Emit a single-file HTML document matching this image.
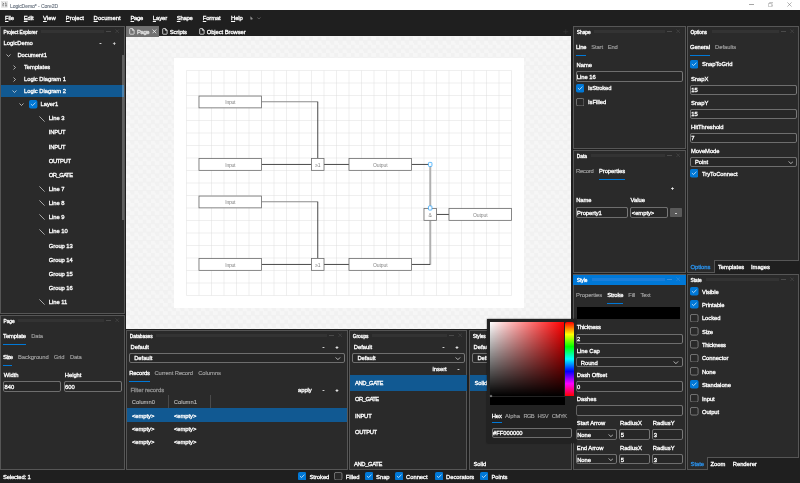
<!DOCTYPE html>
<html><head><meta charset="utf-8"><title>LogicDemo* - Core2D</title>
<style>
html,body{margin:0;padding:0;background:#1f1f1f;}
body{width:800px;height:483px;position:relative;overflow:hidden;font-family:"Liberation Sans",sans-serif;}
div,.a,.t{position:absolute;}
.t{white-space:nowrap;display:block;}
u{text-decoration-thickness:0.4px;text-underline-offset:0.9px;}
#r{left:0;top:0;width:800px;height:483px;will-change:transform;}
</style></head><body><div id="r">
<div style="left:0px;top:0px;width:800px;height:9.6px;background:#ffffff;"></div>
<svg class="a" style="left:0.9px;top:1.1px" width="7" height="6.6" viewBox="0 0 14 13.2"><rect x="0.4" y="0.4" width="13.2" height="12.4" fill="#f0f0f0" stroke="#d4d4d4" stroke-width="0.8"/><path d="M2.6 3.6 L6.2 5.6 L2.6 7.6 M2.6 9.6 H6.2" stroke="#3a3a3a" stroke-width="1.1" fill="none"/><path d="M8.4 4.4 L10 3.4 V10 M8.4 10 H11.6" stroke="#3a3a3a" stroke-width="1.2" fill="none"/></svg>
<span class="t" style="top:2px;font-size:5.1px;line-height:8px;color:#6a7480;letter-spacing:-0.089px;-webkit-text-stroke:0.12px #6a7480;left:9.9px;">LogicDemo* - Core2D</span>
<div style="left:749.4px;top:4.15px;width:4.4px;height:0.5px;background:#a6a6a6;"></div>
<svg class="a" style="left:767.6px;top:1.8px" width="5.6" height="5.2" viewBox="0 0 11 10"><rect x="0.7" y="2.7" width="6.8" height="6.6" rx="1" fill="#fff" stroke="#8a8a8a" stroke-width="1.0"/><path d="M3 2.5 V1.6 Q3 0.7 4 0.7 H9.3 Q10.3 0.7 10.3 1.7 V6.5 Q10.3 7.4 9.4 7.4 H7.6" fill="none" stroke="#8a8a8a" stroke-width="1.0"/></svg>
<svg class="a" style="left:787px;top:1.9px" width="5" height="5" viewBox="0 0 10 10"><path d="M0.8 0.8 L9.2 9.2 M9.2 0.8 L0.8 9.2" stroke="#707070" stroke-width="1.0" fill="none"/></svg>
<div style="left:0px;top:9.6px;width:800px;height:473.4px;background:#1f1f1f;"></div>
<span class="t" style="top:14px;font-size:5.9px;line-height:8px;color:#fff;letter-spacing:-0.177px;-webkit-text-stroke:0.3px #fff;left:5px;"><u>F</u>ile</span>
<span class="t" style="top:14px;font-size:5.9px;line-height:8px;color:#fff;letter-spacing:-0.117px;-webkit-text-stroke:0.3px #fff;left:23.8px;"><u>E</u>dit</span>
<span class="t" style="top:14px;font-size:5.9px;line-height:8px;color:#fff;letter-spacing:0.030px;-webkit-text-stroke:0.3px #fff;left:43px;"><u>V</u>iew</span>
<span class="t" style="top:14px;font-size:5.9px;line-height:8px;color:#fff;letter-spacing:-0.023px;-webkit-text-stroke:0.3px #fff;left:65.8px;"><u>P</u>roject</span>
<span class="t" style="top:14px;font-size:5.9px;line-height:8px;color:#fff;letter-spacing:0.039px;-webkit-text-stroke:0.3px #fff;left:93.6px;"><u>D</u>ocument</span>
<span class="t" style="top:14px;font-size:5.9px;line-height:8px;color:#fff;letter-spacing:-0.320px;-webkit-text-stroke:0.3px #fff;left:130.5px;"><u>P</u>age</span>
<span class="t" style="top:14px;font-size:5.9px;line-height:8px;color:#fff;letter-spacing:-0.112px;-webkit-text-stroke:0.3px #fff;left:152.8px;"><u>L</u>ayer</span>
<span class="t" style="top:14px;font-size:5.9px;line-height:8px;color:#fff;letter-spacing:-0.272px;-webkit-text-stroke:0.3px #fff;left:176.8px;"><u>S</u>hape</span>
<span class="t" style="top:14px;font-size:5.9px;line-height:8px;color:#fff;letter-spacing:-0.164px;-webkit-text-stroke:0.3px #fff;left:202.8px;"><u>F</u>ormat</span>
<span class="t" style="top:14px;font-size:5.9px;line-height:8px;color:#fff;letter-spacing:-0.084px;-webkit-text-stroke:0.3px #fff;left:231px;"><u>H</u>elp</span>
<svg class="a" style="left:250.2px;top:15.6px" width="3.3" height="4.8" viewBox="0 0 6.6 9.6"><path d="M0.8 0.3 L0.8 7.6 L2.5 6.2 L3.8 9.2 L5.2 8.6 L3.9 5.8 L6.2 5.6 Z" fill="#8f8f8f"/></svg>
<svg class="a" style="left:257.1px;top:16.95px" width="3.8" height="2.5" viewBox="0 0 10 6"><path d="M0.8 0.8 L5 5 L9.2 0.8" fill="none" stroke="#808080" stroke-width="1.58"/></svg>
<div style="left:0.1px;top:26.3px;width:124.7px;height:287.8px;background:#2a2a2a;box-shadow:inset 0 0 0 1px #565656;"></div>
<span class="t" style="top:29px;font-size:4.85px;line-height:8px;color:#fff;letter-spacing:-0.04px;-webkit-text-stroke:0.3px #fff;left:3.5px;">Project Explorer</span>
<div style="left:40.5px;top:29.9px;width:63.7px;height:3px;background:#333333;"></div>
<div style="left:106.3px;top:31.1px;width:4.9px;height:0.7px;background:#4a4a4a;"></div>
<svg class="a" style="left:115.2px;top:29.3px" width="4.4" height="4.4" viewBox="0 0 10 10"><path d="M1 1 L9 9 M9 1 L1 9" stroke="#4a4a4a" stroke-width="1.5" fill="none"/></svg>
<span class="t" style="top:39px;font-size:5.83px;line-height:8px;color:#fff;letter-spacing:-0.04px;-webkit-text-stroke:0.3px #fff;left:3.6px;">LogicDemo</span>
<span class="t" style="top:39px;font-size:5.83px;line-height:8px;color:#fff;letter-spacing:-0.04px;-webkit-text-stroke:0.3px #fff;left:99.5px;">-</span>
<span class="t" style="top:39px;font-size:5px;line-height:8px;color:#fff;letter-spacing:-0.04px;-webkit-text-stroke:0.15px #fff;left:112.8px;">+</span>
<svg class="a" style="left:5.7px;top:53.5px" width="5" height="3" viewBox="0 0 10 6"><path d="M1 1 L5 5 L9 1" fill="none" stroke="#dcdcdc" stroke-width="1.5"/></svg>
<span class="t" style="top:51px;font-size:5.83px;line-height:8px;color:#fff;letter-spacing:-0.04px;-webkit-text-stroke:0.3px #fff;left:17.4px;">Document1</span>
<svg class="a" style="left:13.1px;top:64.5px" width="3" height="5" viewBox="0 0 6 10"><path d="M1 1 L5 5 L1 9" fill="none" stroke="#dcdcdc" stroke-width="1.5"/></svg>
<span class="t" style="top:63px;font-size:5.83px;line-height:8px;color:#fff;letter-spacing:-0.04px;-webkit-text-stroke:0.3px #fff;left:24px;">Templates</span>
<svg class="a" style="left:13.1px;top:76.5px" width="3" height="5" viewBox="0 0 6 10"><path d="M1 1 L5 5 L1 9" fill="none" stroke="#dcdcdc" stroke-width="1.5"/></svg>
<span class="t" style="top:75px;font-size:5.83px;line-height:8px;color:#fff;letter-spacing:-0.04px;-webkit-text-stroke:0.3px #fff;left:24px;">Logic Diagram 1</span>
<div style="left:1.1px;top:85.2px;width:122.7px;height:11.9px;background:#115992;"></div>
<svg class="a" style="left:12.3px;top:89.7px" width="5" height="3" viewBox="0 0 10 6"><path d="M1 1 L5 5 L9 1" fill="none" stroke="#dcdcdc" stroke-width="1.5"/></svg>
<span class="t" style="top:87px;font-size:5.83px;line-height:8px;color:#fff;letter-spacing:-0.04px;-webkit-text-stroke:0.3px #fff;left:24px;">Logic Diagram 2</span>
<svg class="a" style="left:18.9px;top:102.9px" width="5" height="3" viewBox="0 0 10 6"><path d="M1 1 L5 5 L9 1" fill="none" stroke="#dcdcdc" stroke-width="1.5"/></svg>
<svg class="a" style="left:29.3px;top:100.2px" width="8.4" height="8.4" viewBox="0 0 20 20"><rect x="0" y="0" width="20" height="20" rx="4.2" fill="#0078d7"/><path d="M5.2 10.3 L8.3 13.2 L14.8 7.1" fill="none" stroke="#fff" stroke-width="1.6" stroke-linecap="round" stroke-linejoin="round"/></svg>
<span class="t" style="top:100px;font-size:5.83px;line-height:8px;color:#fff;letter-spacing:-0.04px;-webkit-text-stroke:0.3px #fff;left:40.6px;">Layer1</span>
<svg class="a" style="left:39px;top:115.5px" width="6" height="6" viewBox="0 0 6 6"><path d="M0.4 0.4 L5.6 5.6" stroke="#d2d2d2" stroke-width="0.75" fill="none"/></svg>
<span class="t" style="top:114px;font-size:5.83px;line-height:8px;color:#fff;letter-spacing:-0.04px;-webkit-text-stroke:0.3px #fff;left:48.8px;">Line 3</span>
<span class="t" style="top:128px;font-size:5.83px;line-height:8px;color:#fff;letter-spacing:-0.198px;-webkit-text-stroke:0.3px #fff;left:48.8px;">INPUT</span>
<span class="t" style="top:143px;font-size:5.83px;line-height:8px;color:#fff;letter-spacing:-0.198px;-webkit-text-stroke:0.3px #fff;left:48.8px;">INPUT</span>
<span class="t" style="top:157px;font-size:5.83px;line-height:8px;color:#fff;letter-spacing:-0.361px;-webkit-text-stroke:0.3px #fff;left:48.8px;">OUTPUT</span>
<span class="t" style="top:171px;font-size:5.83px;line-height:8px;color:#fff;letter-spacing:-0.533px;-webkit-text-stroke:0.3px #fff;left:48.8px;">OR_GATE</span>
<svg class="a" style="left:39px;top:186.2px" width="6" height="6" viewBox="0 0 6 6"><path d="M0.4 0.4 L5.6 5.6" stroke="#d2d2d2" stroke-width="0.75" fill="none"/></svg>
<span class="t" style="top:185px;font-size:5.83px;line-height:8px;color:#fff;letter-spacing:-0.04px;-webkit-text-stroke:0.3px #fff;left:48.8px;">Line 7</span>
<svg class="a" style="left:39px;top:200.3px" width="6" height="6" viewBox="0 0 6 6"><path d="M0.4 0.4 L5.6 5.6" stroke="#d2d2d2" stroke-width="0.75" fill="none"/></svg>
<span class="t" style="top:199px;font-size:5.83px;line-height:8px;color:#fff;letter-spacing:-0.04px;-webkit-text-stroke:0.3px #fff;left:48.8px;">Line 8</span>
<svg class="a" style="left:39px;top:214.4px" width="6" height="6" viewBox="0 0 6 6"><path d="M0.4 0.4 L5.6 5.6" stroke="#d2d2d2" stroke-width="0.75" fill="none"/></svg>
<span class="t" style="top:213px;font-size:5.83px;line-height:8px;color:#fff;letter-spacing:-0.04px;-webkit-text-stroke:0.3px #fff;left:48.8px;">Line 9</span>
<svg class="a" style="left:39px;top:228.5px" width="6" height="6" viewBox="0 0 6 6"><path d="M0.4 0.4 L5.6 5.6" stroke="#d2d2d2" stroke-width="0.75" fill="none"/></svg>
<span class="t" style="top:227px;font-size:5.83px;line-height:8px;color:#fff;letter-spacing:-0.04px;-webkit-text-stroke:0.3px #fff;left:48.8px;">Line 10</span>
<span class="t" style="top:242px;font-size:5.83px;line-height:8px;color:#fff;letter-spacing:-0.04px;-webkit-text-stroke:0.3px #fff;left:48.8px;">Group 13</span>
<span class="t" style="top:256px;font-size:5.83px;line-height:8px;color:#fff;letter-spacing:-0.04px;-webkit-text-stroke:0.3px #fff;left:48.8px;">Group 14</span>
<span class="t" style="top:270px;font-size:5.83px;line-height:8px;color:#fff;letter-spacing:-0.04px;-webkit-text-stroke:0.3px #fff;left:48.8px;">Group 15</span>
<span class="t" style="top:284px;font-size:5.83px;line-height:8px;color:#fff;letter-spacing:-0.04px;-webkit-text-stroke:0.3px #fff;left:48.8px;">Group 16</span>
<svg class="a" style="left:39px;top:299.3px" width="6" height="6" viewBox="0 0 6 6"><path d="M0.4 0.4 L5.6 5.6" stroke="#d2d2d2" stroke-width="0.75" fill="none"/></svg>
<span class="t" style="top:298px;font-size:5.83px;line-height:8px;color:#fff;letter-spacing:-0.04px;-webkit-text-stroke:0.3px #fff;left:48.8px;">Line 11</span>
<div style="left:121.9px;top:54.8px;width:2.1px;height:165.5px;background:rgba(255,255,255,0.25);"></div>
<div style="left:0.1px;top:315.1px;width:124.7px;height:155.1px;background:#2a2a2a;box-shadow:inset 0 0 0 1px #565656;"></div>
<span class="t" style="top:318px;font-size:4.85px;line-height:8px;color:#fff;letter-spacing:-0.04px;-webkit-text-stroke:0.3px #fff;left:3.5px;">Page</span>
<div style="left:17.5px;top:318.7px;width:86.7px;height:3px;background:#333333;"></div>
<div style="left:106.3px;top:319.9px;width:4.9px;height:0.7px;background:#4a4a4a;"></div>
<svg class="a" style="left:115.2px;top:318.1px" width="4.4" height="4.4" viewBox="0 0 10 10"><path d="M1 1 L9 9 M9 1 L1 9" stroke="#4a4a4a" stroke-width="1.5" fill="none"/></svg>
<span class="t" style="top:332px;font-size:5.83px;line-height:8px;color:#fff;letter-spacing:-0.095px;-webkit-text-stroke:0.3px #fff;left:3.1px;">Template</span>
<div style="left:3.1px;top:343.75px;width:22.9px;height:0.9px;background:#0078d7;"></div>
<span class="t" style="top:332px;font-size:5.83px;line-height:8px;color:#a2a2a2;letter-spacing:-0.129px;-webkit-text-stroke:0.15px #a2a2a2;left:31.2px;">Data</span>
<span class="t" style="top:353px;font-size:5.83px;line-height:8px;color:#fff;letter-spacing:-0.485px;-webkit-text-stroke:0.3px #fff;left:3.1px;">Size</span>
<div style="left:3.1px;top:364.75px;width:9.4px;height:0.9px;background:#0078d7;"></div>
<span class="t" style="top:353px;font-size:5.83px;line-height:8px;color:#a2a2a2;letter-spacing:-0.041px;-webkit-text-stroke:0.15px #a2a2a2;left:18px;">Background</span>
<span class="t" style="top:353px;font-size:5.83px;line-height:8px;color:#a2a2a2;letter-spacing:-0.078px;-webkit-text-stroke:0.15px #a2a2a2;left:53.8px;">Grid</span>
<span class="t" style="top:353px;font-size:5.83px;line-height:8px;color:#a2a2a2;letter-spacing:-0.204px;-webkit-text-stroke:0.15px #a2a2a2;left:70px;">Data</span>
<span class="t" style="top:371px;font-size:5.83px;line-height:8px;color:#fff;letter-spacing:-0.04px;-webkit-text-stroke:0.3px #fff;left:3.8px;">Width</span>
<span class="t" style="top:371px;font-size:5.83px;line-height:8px;color:#fff;letter-spacing:-0.04px;-webkit-text-stroke:0.3px #fff;left:64.8px;">Height</span>
<div style="left:3.1px;top:381px;width:58.1px;height:11px;background:#272727;box-shadow:inset 0 0 0 0.85px #868686;border-radius:2.4px;"></div>
<span class="t" style="top:383px;font-size:5.83px;line-height:8px;color:#fff;letter-spacing:-0.04px;-webkit-text-stroke:0.3px #fff;left:4.6px;">840</span>
<div style="left:63.6px;top:381px;width:58.2px;height:11px;background:#272727;box-shadow:inset 0 0 0 0.85px #868686;border-radius:2.4px;"></div>
<span class="t" style="top:383px;font-size:5.83px;line-height:8px;color:#fff;letter-spacing:-0.04px;-webkit-text-stroke:0.3px #fff;left:65.1px;">600</span>
<div style="left:126.3px;top:36.3px;width:444.9px;height:292.8px;background:#f4f4f4;background-image:conic-gradient(#f6f6f6 25%,#f1f1f1 0 50%,#f6f6f6 0 75%,#f1f1f1 0);background-size:8.333px 8.333px;background-position:0.1px 0.4px;"></div>
<div style="left:126.2px;top:26.2px;width:32.8px;height:10.7px;background:#727272;"></div>
<svg class="a" style="left:129.1px;top:27.9px" width="5.8" height="6.8" viewBox="0 0 11.6 13.6"><path d="M1.4 2.4 Q1.4 1.2 2.6 1.2 H6.8 L10.2 4.6 V11.2 Q10.2 12.4 9 12.4 H2.6 Q1.4 12.4 1.4 11.2 Z M6.8 1.2 V4.6 H10.2" fill="none" stroke="#f0f0f0" stroke-width="1.5" stroke-linejoin="round"/></svg>
<span class="t" style="top:28px;font-size:5.9px;line-height:8px;color:#e4e4e4;letter-spacing:-0.445px;-webkit-text-stroke:0.3px #e4e4e4;left:137.1px;">Page</span>
<svg class="a" style="left:151.8px;top:28.9px" width="4.8" height="4.8" viewBox="0 0 10 10"><path d="M1.2 1.2 L8.8 8.8 M8.8 1.2 L1.2 8.8" stroke="#f4f4f4" stroke-width="1.7" fill="none"/></svg>
<svg class="a" style="left:161.9px;top:27.9px" width="5.8" height="6.8" viewBox="0 0 11.6 13.6"><path d="M1.4 2.4 Q1.4 1.2 2.6 1.2 H6.8 L10.2 4.6 V11.2 Q10.2 12.4 9 12.4 H2.6 Q1.4 12.4 1.4 11.2 Z M6.8 1.2 V4.6 H10.2" fill="none" stroke="#fff" stroke-width="1.5" stroke-linejoin="round"/></svg>
<span class="t" style="top:28px;font-size:5.9px;line-height:8px;color:#fff;letter-spacing:-0.104px;-webkit-text-stroke:0.3px #fff;left:169.7px;">Scripts</span>
<svg class="a" style="left:198.8px;top:27.9px" width="5.8" height="6.8" viewBox="0 0 11.6 13.6"><path d="M1.4 2.4 Q1.4 1.2 2.6 1.2 H6.8 L10.2 4.6 V11.2 Q10.2 12.4 9 12.4 H2.6 Q1.4 12.4 1.4 11.2 Z M6.8 1.2 V4.6 H10.2" fill="none" stroke="#fff" stroke-width="1.5" stroke-linejoin="round"/></svg>
<span class="t" style="top:28px;font-size:5.9px;line-height:8px;color:#fff;letter-spacing:-0.095px;-webkit-text-stroke:0.3px #fff;left:206.7px;">Object Browser</span>
<svg class="a" style="left:563px;top:28.6px" width="5.6" height="5.6" viewBox="0 0 10 10"><path d="M5 0.5 V9.5 M0.5 5 H9.5" stroke="#3c3c3c" stroke-width="1" fill="none"/></svg>
<div style="left:174px;top:58px;width:350px;height:250px;background:#fff;"></div>
<svg class="a" style="left:174px;top:58px" width="350" height="250" viewBox="174 58 350 250"><path d="M186.5 70.5 V295.5 M199 70.5 V295.5 M211.5 70.5 V295.5 M224 70.5 V295.5 M236.5 70.5 V295.5 M249 70.5 V295.5 M261.5 70.5 V295.5 M274 70.5 V295.5 M286.5 70.5 V295.5 M299 70.5 V295.5 M311.5 70.5 V295.5 M324 70.5 V295.5 M336.5 70.5 V295.5 M349 70.5 V295.5 M361.5 70.5 V295.5 M374 70.5 V295.5 M386.5 70.5 V295.5 M399 70.5 V295.5 M411.5 70.5 V295.5 M424 70.5 V295.5 M436.5 70.5 V295.5 M449 70.5 V295.5 M461.5 70.5 V295.5 M474 70.5 V295.5 M486.5 70.5 V295.5 M499 70.5 V295.5 M511.5 70.5 V295.5 M186.5 70.5 H511.5 M186.5 83 H511.5 M186.5 95.5 H511.5 M186.5 108 H511.5 M186.5 120.5 H511.5 M186.5 133 H511.5 M186.5 145.5 H511.5 M186.5 158 H511.5 M186.5 170.5 H511.5 M186.5 183 H511.5 M186.5 195.5 H511.5 M186.5 208 H511.5 M186.5 220.5 H511.5 M186.5 233 H511.5 M186.5 245.5 H511.5 M186.5 258 H511.5 M186.5 270.5 H511.5 M186.5 283 H511.5 M186.5 295.5 H511.5 " stroke="#dcdcdc" stroke-width="0.45" fill="none"/><path d="M430.25 264.65 V220.5" stroke="#b0b0b0" stroke-width="2.0" fill="none"/><path d="M261.5 101.75 H318.15 M261.5 201.75 H318.15" stroke="#8c8c8c" stroke-width="1.1" fill="none"/><path d="M317.75 101.75 V158 M261.5 164.25 H311.5 M324 164.25 H349 M317.75 201.75 V258 M261.5 264.25 H311.5 M324 264.25 H349 M411.5 164.25 H430.25 M411.5 264.25 H430.25 M436.5 214.25 H449" stroke="#333" stroke-width="0.9" fill="none" transform="translate(0,0.2)"/><path d="M430.25 164.25 V208.5" stroke="#b0b0b0" stroke-width="2.0" fill="none"/><rect x="199" y="96.05" width="62.5" height="11.8" fill="#fff" stroke="#6c6c6c" stroke-width="0.8"/><rect x="199" y="158.55" width="62.5" height="11.8" fill="#fff" stroke="#6c6c6c" stroke-width="0.8"/><rect x="199" y="196.05" width="62.5" height="11.8" fill="#fff" stroke="#6c6c6c" stroke-width="0.8"/><rect x="199" y="258.55" width="62.5" height="11.8" fill="#fff" stroke="#6c6c6c" stroke-width="0.8"/><rect x="311.5" y="158.55" width="12.5" height="11.8" fill="#fff" stroke="#6c6c6c" stroke-width="0.8"/><rect x="311.5" y="258.55" width="12.5" height="11.8" fill="#fff" stroke="#6c6c6c" stroke-width="0.8"/><rect x="424" y="208.55" width="12.5" height="11.8" fill="#fff" stroke="#6c6c6c" stroke-width="0.8"/><rect x="349" y="158.55" width="62.5" height="11.8" fill="#fff" stroke="#6c6c6c" stroke-width="0.8"/><rect x="349" y="258.55" width="62.5" height="11.8" fill="#fff" stroke="#6c6c6c" stroke-width="0.8"/><rect x="449" y="208.55" width="62.5" height="11.8" fill="#fff" stroke="#6c6c6c" stroke-width="0.8"/><rect x="428.45" y="162.4" width="3.5" height="4.1" rx="0.8" fill="#f8fcff" stroke="#3aa9fb" stroke-width="0.8"/><rect x="428.45" y="205.95" width="3.5" height="4.1" rx="0.8" fill="#f8fcff" stroke="#3aa9fb" stroke-width="0.8"/></svg>
<span class="t" style="top:98px;font-size:5px;line-height:8px;color:#868686;letter-spacing:-0.224px;left:230.25px;transform:translateX(-50%);">Input</span>
<span class="t" style="top:161px;font-size:5px;line-height:8px;color:#868686;letter-spacing:-0.224px;left:230.25px;transform:translateX(-50%);">Input</span>
<span class="t" style="top:198px;font-size:5px;line-height:8px;color:#868686;letter-spacing:-0.224px;left:230.25px;transform:translateX(-50%);">Input</span>
<span class="t" style="top:261px;font-size:5px;line-height:8px;color:#868686;letter-spacing:-0.224px;left:230.25px;transform:translateX(-50%);">Input</span>
<span class="t" style="top:161px;font-size:5px;line-height:8px;color:#868686;letter-spacing:-0.362px;left:317.75px;transform:translateX(-50%);">≥1</span>
<span class="t" style="top:261px;font-size:5px;line-height:8px;color:#868686;letter-spacing:-0.362px;left:317.75px;transform:translateX(-50%);">≥1</span>
<span class="t" style="top:211px;font-size:5px;line-height:8px;color:#868686;letter-spacing:-0.04px;left:430.25px;transform:translateX(-50%);">&amp;</span>
<span class="t" style="top:161px;font-size:5px;line-height:8px;color:#868686;letter-spacing:-0.102px;left:380.25px;transform:translateX(-50%);">Output</span>
<span class="t" style="top:261px;font-size:5px;line-height:8px;color:#868686;letter-spacing:-0.102px;left:380.25px;transform:translateX(-50%);">Output</span>
<span class="t" style="top:211px;font-size:5px;line-height:8px;color:#868686;letter-spacing:-0.102px;left:480.25px;transform:translateX(-50%);">Output</span>
<div style="left:126.4px;top:330.2px;width:221.3px;height:140px;background:#2a2a2a;box-shadow:inset 0 0 0 1px #565656;"></div>
<span class="t" style="top:333px;font-size:4.85px;line-height:8px;color:#fff;letter-spacing:-0.04px;-webkit-text-stroke:0.3px #fff;left:129.8px;">Databases</span>
<div style="left:155.8px;top:333.8px;width:171.3px;height:3px;background:#333333;"></div>
<div style="left:329.2px;top:335px;width:4.9px;height:0.7px;background:#4a4a4a;"></div>
<svg class="a" style="left:338.1px;top:333.2px" width="4.4" height="4.4" viewBox="0 0 10 10"><path d="M1 1 L9 9 M9 1 L1 9" stroke="#4a4a4a" stroke-width="1.5" fill="none"/></svg>
<span class="t" style="top:343px;font-size:5.83px;line-height:8px;color:#fff;letter-spacing:-0.04px;-webkit-text-stroke:0.3px #fff;left:130.6px;">Default</span>
<span class="t" style="top:343px;font-size:5.83px;line-height:8px;color:#fff;letter-spacing:-0.04px;-webkit-text-stroke:0.3px #fff;left:322.6px;">-</span>
<span class="t" style="top:343px;font-size:5px;line-height:8px;color:#fff;letter-spacing:-0.04px;-webkit-text-stroke:0.2px #fff;left:335.5px;">+</span>
<div style="left:129.2px;top:352.9px;width:215.6px;height:9.8px;background:#272727;box-shadow:inset 0 0 0 0.85px #868686;border-radius:2.4px;"></div>
<span class="t" style="top:354px;font-size:5.83px;line-height:8px;color:#fff;letter-spacing:-0.04px;-webkit-text-stroke:0.3px #fff;left:134.2px;">Default</span>
<svg class="a" style="left:335.4px;top:356.7px" width="5.8" height="3.2" viewBox="0 0 10 6"><path d="M0.8 0.8 L5 5 L9.2 0.8" fill="none" stroke="#d8d8d8" stroke-width="1.55"/></svg>
<span class="t" style="top:369px;font-size:5.83px;line-height:8px;color:#fff;letter-spacing:-0.158px;-webkit-text-stroke:0.3px #fff;left:129.2px;">Records</span>
<div style="left:129.2px;top:380.85px;width:20.6px;height:0.9px;background:#0078d7;"></div>
<span class="t" style="top:369px;font-size:5.83px;line-height:8px;color:#a2a2a2;letter-spacing:-0.097px;-webkit-text-stroke:0.15px #a2a2a2;left:154.5px;">Current Record</span>
<span class="t" style="top:369px;font-size:5.83px;line-height:8px;color:#a2a2a2;letter-spacing:-0.029px;-webkit-text-stroke:0.15px #a2a2a2;left:198.2px;">Columns</span>
<span class="t" style="top:386px;font-size:5.83px;line-height:8px;color:#8e8e8e;letter-spacing:-0.04px;-webkit-text-stroke:0.3px #8e8e8e;left:130.6px;">Filter records</span>
<span class="t" style="top:386px;font-size:5.83px;line-height:8px;color:#fff;letter-spacing:-0.04px;-webkit-text-stroke:0.3px #fff;left:298px;">apply</span>
<span class="t" style="top:386px;font-size:5.83px;line-height:8px;color:#fff;letter-spacing:-0.04px;-webkit-text-stroke:0.3px #fff;left:322.6px;">-</span>
<span class="t" style="top:386px;font-size:5px;line-height:8px;color:#fff;letter-spacing:-0.04px;-webkit-text-stroke:0.2px #fff;left:335.5px;">+</span>
<div style="left:168.4px;top:395px;width:0.5px;height:13.6px;background:#4a4a4a;"></div>
<div style="left:210.4px;top:395px;width:0.5px;height:13.6px;background:#4a4a4a;"></div>
<span class="t" style="top:398px;font-size:5.83px;line-height:8px;color:#bdbdbd;letter-spacing:-0.04px;-webkit-text-stroke:0.1px #bdbdbd;left:131.8px;">Column0</span>
<span class="t" style="top:398px;font-size:5.83px;line-height:8px;color:#bdbdbd;letter-spacing:-0.04px;-webkit-text-stroke:0.1px #bdbdbd;left:173.8px;">Column1</span>
<div style="left:127.3px;top:408.4px;width:219.5px;height:13.7px;background:#115992;"></div>
<span class="t" style="top:412px;font-size:5.83px;line-height:8px;color:#fff;letter-spacing:-0.04px;-webkit-text-stroke:0.3px #fff;left:131.9px;">&lt;empty&gt;</span>
<span class="t" style="top:412px;font-size:5.83px;line-height:8px;color:#fff;letter-spacing:-0.04px;-webkit-text-stroke:0.3px #fff;left:173.9px;">&lt;empty&gt;</span>
<span class="t" style="top:425px;font-size:5.83px;line-height:8px;color:#fff;letter-spacing:-0.04px;-webkit-text-stroke:0.3px #fff;left:131.9px;">&lt;empty&gt;</span>
<span class="t" style="top:425px;font-size:5.83px;line-height:8px;color:#fff;letter-spacing:-0.04px;-webkit-text-stroke:0.3px #fff;left:173.9px;">&lt;empty&gt;</span>
<span class="t" style="top:438px;font-size:5.83px;line-height:8px;color:#fff;letter-spacing:-0.04px;-webkit-text-stroke:0.3px #fff;left:131.9px;">&lt;empty&gt;</span>
<span class="t" style="top:438px;font-size:5.83px;line-height:8px;color:#fff;letter-spacing:-0.04px;-webkit-text-stroke:0.3px #fff;left:173.9px;">&lt;empty&gt;</span>
<div style="left:349.4px;top:330.2px;width:118.1px;height:140px;background:#2a2a2a;box-shadow:inset 0 0 0 1px #565656;"></div>
<span class="t" style="top:333px;font-size:4.85px;line-height:8px;color:#fff;letter-spacing:-0.04px;-webkit-text-stroke:0.3px #fff;left:352.8px;">Groups</span>
<div style="left:371.8px;top:333.8px;width:75.1px;height:3px;background:#333333;"></div>
<div style="left:449px;top:335px;width:4.9px;height:0.7px;background:#4a4a4a;"></div>
<svg class="a" style="left:457.9px;top:333.2px" width="4.4" height="4.4" viewBox="0 0 10 10"><path d="M1 1 L9 9 M9 1 L1 9" stroke="#4a4a4a" stroke-width="1.5" fill="none"/></svg>
<span class="t" style="top:343px;font-size:5.83px;line-height:8px;color:#fff;letter-spacing:-0.04px;-webkit-text-stroke:0.3px #fff;left:353.8px;">Default</span>
<span class="t" style="top:343px;font-size:5.83px;line-height:8px;color:#fff;letter-spacing:-0.04px;-webkit-text-stroke:0.3px #fff;left:442.4px;">-</span>
<span class="t" style="top:343px;font-size:5px;line-height:8px;color:#fff;letter-spacing:-0.04px;-webkit-text-stroke:0.2px #fff;left:455.4px;">+</span>
<div style="left:352.4px;top:352.9px;width:112.2px;height:9.8px;background:#272727;box-shadow:inset 0 0 0 0.85px #868686;border-radius:2.4px;"></div>
<span class="t" style="top:354px;font-size:5.83px;line-height:8px;color:#fff;letter-spacing:-0.04px;-webkit-text-stroke:0.3px #fff;left:357.4px;">Default</span>
<svg class="a" style="left:455.2px;top:356.7px" width="5.8" height="3.2" viewBox="0 0 10 6"><path d="M0.8 0.8 L5 5 L9.2 0.8" fill="none" stroke="#d8d8d8" stroke-width="1.55"/></svg>
<span class="t" style="top:365px;font-size:5.83px;line-height:8px;color:#fff;letter-spacing:-0.04px;-webkit-text-stroke:0.3px #fff;left:432.6px;">insert</span>
<span class="t" style="top:365px;font-size:5.83px;line-height:8px;color:#fff;letter-spacing:-0.04px;-webkit-text-stroke:0.3px #fff;left:457.6px;">-</span>
<div style="left:350.3px;top:374.6px;width:116.3px;height:16.8px;background:#115992;"></div>
<span class="t" style="top:379px;font-size:5.83px;line-height:8px;color:#fff;letter-spacing:-0.374px;-webkit-text-stroke:0.3px #fff;left:355px;">AND_GATE</span>
<span class="t" style="top:395px;font-size:5.83px;line-height:8px;color:#fff;letter-spacing:-0.533px;-webkit-text-stroke:0.3px #fff;left:355px;">OR_GATE</span>
<span class="t" style="top:412px;font-size:5.83px;line-height:8px;color:#fff;letter-spacing:-0.198px;-webkit-text-stroke:0.3px #fff;left:355px;">INPUT</span>
<span class="t" style="top:428px;font-size:5.83px;line-height:8px;color:#fff;letter-spacing:-0.361px;-webkit-text-stroke:0.3px #fff;left:355px;">OUTPUT</span>
<span class="t" style="top:460px;font-size:5.83px;line-height:8px;color:#fff;letter-spacing:-0.374px;-webkit-text-stroke:0.3px #fff;left:354px;">AND_GATE</span>
<div style="left:469.4px;top:330.2px;width:102.4px;height:140px;background:#2a2a2a;box-shadow:inset 0 0 0 1px #565656;"></div>
<span class="t" style="top:333px;font-size:4.85px;line-height:8px;color:#fff;letter-spacing:-0.04px;-webkit-text-stroke:0.3px #fff;left:472.8px;">Styles</span>
<div style="left:489.8px;top:333.8px;width:61.4px;height:3px;background:#333333;"></div>
<div style="left:553.3px;top:335px;width:4.9px;height:0.7px;background:#4a4a4a;"></div>
<svg class="a" style="left:562.2px;top:333.2px" width="4.4" height="4.4" viewBox="0 0 10 10"><path d="M1 1 L9 9 M9 1 L1 9" stroke="#4a4a4a" stroke-width="1.5" fill="none"/></svg>
<span class="t" style="top:343px;font-size:5.83px;line-height:8px;color:#fff;letter-spacing:-0.04px;-webkit-text-stroke:0.3px #fff;left:473.6px;">Default</span>
<div style="left:472.4px;top:352.9px;width:96px;height:9.8px;background:#272727;box-shadow:inset 0 0 0 0.85px #868686;border-radius:2.4px;"></div>
<span class="t" style="top:354px;font-size:5.83px;line-height:8px;color:#fff;letter-spacing:-0.04px;-webkit-text-stroke:0.3px #fff;left:477.4px;">Default</span>
<svg class="a" style="left:559px;top:356.7px" width="5.8" height="3.2" viewBox="0 0 10 6"><path d="M0.8 0.8 L5 5 L9.2 0.8" fill="none" stroke="#d8d8d8" stroke-width="1.55"/></svg>
<div style="left:470.3px;top:374.6px;width:100.6px;height:16.8px;background:#115992;"></div>
<span class="t" style="top:379px;font-size:5.83px;line-height:8px;color:#fff;letter-spacing:-0.04px;-webkit-text-stroke:0.3px #fff;left:474.4px;">Solid</span>
<span class="t" style="top:460px;font-size:5.83px;line-height:8px;color:#fff;letter-spacing:-0.04px;-webkit-text-stroke:0.3px #fff;left:473.4px;">Solid</span>
<div style="left:573.4px;top:26.3px;width:112.2px;height:122.4px;background:#2a2a2a;box-shadow:inset 0 0 0 1px #565656;"></div>
<span class="t" style="top:29px;font-size:4.85px;line-height:8px;color:#fff;letter-spacing:-0.04px;-webkit-text-stroke:0.3px #fff;left:576.8px;">Shape</span>
<div style="left:593.8px;top:29.9px;width:71.2px;height:3px;background:#333333;"></div>
<div style="left:667.1px;top:31.1px;width:4.9px;height:0.7px;background:#4a4a4a;"></div>
<svg class="a" style="left:676px;top:29.3px" width="4.4" height="4.4" viewBox="0 0 10 10"><path d="M1 1 L9 9 M9 1 L1 9" stroke="#4a4a4a" stroke-width="1.5" fill="none"/></svg>
<span class="t" style="top:43px;font-size:5.83px;line-height:8px;color:#fff;letter-spacing:-0.231px;-webkit-text-stroke:0.3px #fff;left:576.1px;">Line</span>
<div style="left:576.1px;top:54.95px;width:10.1px;height:0.9px;background:#0078d7;"></div>
<span class="t" style="top:43px;font-size:5.83px;line-height:8px;color:#a2a2a2;letter-spacing:-0.122px;-webkit-text-stroke:0.15px #a2a2a2;left:591.2px;">Start</span>
<span class="t" style="top:43px;font-size:5.83px;line-height:8px;color:#a2a2a2;letter-spacing:-0.258px;-webkit-text-stroke:0.15px #a2a2a2;left:607.8px;">End</span>
<span class="t" style="top:61px;font-size:5.83px;line-height:8px;color:#fff;letter-spacing:-0.04px;-webkit-text-stroke:0.3px #fff;left:576.6px;">Name</span>
<div style="left:575.6px;top:71.2px;width:107px;height:10.7px;background:#272727;box-shadow:inset 0 0 0 0.85px #868686;border-radius:2.4px;"></div>
<span class="t" style="top:73px;font-size:5.83px;line-height:8px;color:#fff;letter-spacing:-0.04px;-webkit-text-stroke:0.3px #fff;left:576.8px;">Line 16</span>
<svg class="a" style="left:576px;top:84.2px" width="8.4" height="8.4" viewBox="0 0 20 20"><rect x="0" y="0" width="20" height="20" rx="4.2" fill="#0078d7"/><path d="M5.2 10.3 L8.3 13.2 L14.8 7.1" fill="none" stroke="#fff" stroke-width="1.6" stroke-linecap="round" stroke-linejoin="round"/></svg>
<span class="t" style="top:84px;font-size:5.83px;line-height:8px;color:#fff;letter-spacing:-0.147px;-webkit-text-stroke:0.3px #fff;left:588px;">IsStroked</span>
<svg class="a" style="left:576px;top:97.8px" width="8.4" height="8.4" viewBox="0 0 20 20"><rect x="1" y="1" width="18" height="18" rx="3.8" fill="#292929" stroke="#8c8c8c" stroke-width="1.9"/></svg>
<span class="t" style="top:98px;font-size:5.83px;line-height:8px;color:#fff;letter-spacing:-0.04px;-webkit-text-stroke:0.3px #fff;left:588px;">IsFilled</span>
<div style="left:573.4px;top:150.1px;width:112.2px;height:123px;background:#2a2a2a;box-shadow:inset 0 0 0 1px #565656;"></div>
<span class="t" style="top:153px;font-size:4.85px;line-height:8px;color:#fff;letter-spacing:-0.04px;-webkit-text-stroke:0.3px #fff;left:576.8px;">Data</span>
<div style="left:590.8px;top:153.7px;width:74.2px;height:3px;background:#333333;"></div>
<div style="left:667.1px;top:154.9px;width:4.9px;height:0.7px;background:#4a4a4a;"></div>
<svg class="a" style="left:676px;top:153.1px" width="4.4" height="4.4" viewBox="0 0 10 10"><path d="M1 1 L9 9 M9 1 L1 9" stroke="#4a4a4a" stroke-width="1.5" fill="none"/></svg>
<span class="t" style="top:167px;font-size:5.83px;line-height:8px;color:#a2a2a2;letter-spacing:-0.216px;-webkit-text-stroke:0.15px #a2a2a2;left:576.1px;">Record</span>
<span class="t" style="top:167px;font-size:5.83px;line-height:8px;color:#fff;letter-spacing:-0.037px;-webkit-text-stroke:0.3px #fff;left:598.9px;">Properties</span>
<div style="left:598.9px;top:179.05px;width:26.2px;height:0.9px;background:#0078d7;"></div>
<span class="t" style="top:184px;font-size:5px;line-height:8px;color:#fff;letter-spacing:-0.04px;-webkit-text-stroke:0.2px #fff;left:671px;">+</span>
<span class="t" style="top:196px;font-size:5.83px;line-height:8px;color:#fff;letter-spacing:-0.04px;-webkit-text-stroke:0.3px #fff;left:576.2px;">Name</span>
<span class="t" style="top:196px;font-size:5.83px;line-height:8px;color:#fff;letter-spacing:-0.04px;-webkit-text-stroke:0.3px #fff;left:630.6px;">Value</span>
<div style="left:575.7px;top:207px;width:52px;height:10.7px;background:#272727;box-shadow:inset 0 0 0 0.85px #868686;border-radius:2.4px;"></div>
<span class="t" style="top:209px;font-size:5.83px;line-height:8px;color:#fff;letter-spacing:-0.04px;-webkit-text-stroke:0.3px #fff;left:576.9px;">Property1</span>
<div style="left:630.2px;top:207px;width:37.4px;height:10.7px;background:#272727;box-shadow:inset 0 0 0 0.85px #868686;border-radius:2.4px;"></div>
<span class="t" style="top:209px;font-size:5.83px;line-height:8px;color:#fff;letter-spacing:-0.04px;-webkit-text-stroke:0.3px #fff;left:631.8px;">&lt;empty&gt;</span>
<div style="left:670.3px;top:207.9px;width:11.8px;height:8.9px;background:#5a5a5a;border-radius:0.8px;"></div>
<span class="t" style="top:209px;font-size:5.83px;line-height:8px;color:#fff;letter-spacing:-0.04px;-webkit-text-stroke:0.3px #fff;left:674.9px;">-</span>
<div style="left:573.4px;top:274.3px;width:112.2px;height:195.9px;background:#2a2a2a;box-shadow:inset 0 0 0 1px #565656;"></div>
<div style="left:573.4px;top:274.5px;width:112.2px;height:10.5px;background:#0078d7;"></div>
<span class="t" style="top:277px;font-size:4.85px;line-height:8px;color:#fff;letter-spacing:-0.04px;-webkit-text-stroke:0.3px #fff;left:576.8px;">Style</span>
<div style="left:591.8px;top:277.9px;width:73.2px;height:3px;background:#1a7fdb;"></div>
<div style="left:667.1px;top:279.1px;width:4.9px;height:0.7px;background:#3b8ddb;"></div>
<svg class="a" style="left:676px;top:277.3px" width="4.4" height="4.4" viewBox="0 0 10 10"><path d="M1 1 L9 9 M9 1 L1 9" stroke="#3b8ddb" stroke-width="1.5" fill="none"/></svg>
<span class="t" style="top:291px;font-size:5.83px;line-height:8px;color:#a2a2a2;letter-spacing:-0.067px;-webkit-text-stroke:0.15px #a2a2a2;left:576.1px;">Properties</span>
<span class="t" style="top:291px;font-size:5.83px;line-height:8px;color:#fff;letter-spacing:-0.142px;-webkit-text-stroke:0.3px #fff;left:607.3px;">Stroke</span>
<div style="left:607.3px;top:302.85px;width:16px;height:0.9px;background:#0078d7;"></div>
<span class="t" style="top:291px;font-size:5.83px;line-height:8px;color:#a2a2a2;letter-spacing:-0.137px;-webkit-text-stroke:0.15px #a2a2a2;left:628.3px;">Fill</span>
<span class="t" style="top:291px;font-size:5.83px;line-height:8px;color:#a2a2a2;letter-spacing:-0.173px;-webkit-text-stroke:0.15px #a2a2a2;left:640.5px;">Text</span>
<div style="left:577px;top:306.8px;width:103.2px;height:11.9px;background:#000;"></div>
<span class="t" style="top:323px;font-size:5.83px;line-height:8px;color:#fff;letter-spacing:-0.272px;-webkit-text-stroke:0.3px #fff;left:576.8px;">Thickness</span>
<div style="left:575.6px;top:333.5px;width:107px;height:10.3px;background:#272727;box-shadow:inset 0 0 0 0.85px #868686;border-radius:2.4px;"></div>
<span class="t" style="top:335px;font-size:5.83px;line-height:8px;color:#fff;letter-spacing:-0.04px;-webkit-text-stroke:0.3px #fff;left:577px;">2</span>
<span class="t" style="top:347px;font-size:5.83px;line-height:8px;color:#fff;letter-spacing:-0.04px;-webkit-text-stroke:0.3px #fff;left:576.8px;">Line Cap</span>
<div style="left:575.6px;top:357.2px;width:107px;height:10.3px;background:#272727;box-shadow:inset 0 0 0 0.85px #868686;border-radius:2.4px;"></div>
<span class="t" style="top:359px;font-size:5.83px;line-height:8px;color:#fff;letter-spacing:-0.04px;-webkit-text-stroke:0.3px #fff;left:580.8px;">Round</span>
<svg class="a" style="left:673.2px;top:361.25px" width="5.8" height="3.2" viewBox="0 0 10 6"><path d="M0.8 0.8 L5 5 L9.2 0.8" fill="none" stroke="#d8d8d8" stroke-width="1.55"/></svg>
<span class="t" style="top:371px;font-size:5.83px;line-height:8px;color:#fff;letter-spacing:-0.04px;-webkit-text-stroke:0.3px #fff;left:576.8px;">Dash Offset</span>
<div style="left:575.6px;top:381.1px;width:107px;height:10.6px;background:#272727;box-shadow:inset 0 0 0 0.85px #868686;border-radius:2.4px;"></div>
<span class="t" style="top:383px;font-size:5.83px;line-height:8px;color:#fff;letter-spacing:-0.04px;-webkit-text-stroke:0.3px #fff;left:577px;">0</span>
<span class="t" style="top:395px;font-size:5.83px;line-height:8px;color:#fff;letter-spacing:-0.04px;-webkit-text-stroke:0.3px #fff;left:576.8px;">Dashes</span>
<div style="left:575.6px;top:405.2px;width:107px;height:10.6px;background:#272727;box-shadow:inset 0 0 0 0.85px #868686;border-radius:2.4px;"></div>
<span class="t" style="top:419px;font-size:5.83px;line-height:8px;color:#fff;letter-spacing:-0.04px;-webkit-text-stroke:0.3px #fff;left:576.8px;">Start Arrow</span>
<span class="t" style="top:419px;font-size:5.83px;line-height:8px;color:#fff;letter-spacing:-0.04px;-webkit-text-stroke:0.3px #fff;left:620px;">RadiusX</span>
<span class="t" style="top:419px;font-size:5.83px;line-height:8px;color:#fff;letter-spacing:-0.04px;-webkit-text-stroke:0.3px #fff;left:652.8px;">RadiusY</span>
<div style="left:575.6px;top:429.2px;width:41px;height:10.6px;background:#272727;box-shadow:inset 0 0 0 0.85px #868686;border-radius:2.4px;"></div>
<span class="t" style="top:431px;font-size:5.83px;line-height:8px;color:#fff;letter-spacing:-0.04px;-webkit-text-stroke:0.3px #fff;left:577.2px;">None</span>
<svg class="a" style="left:607.5px;top:433.5px" width="5.8" height="3.2" viewBox="0 0 10 6"><path d="M0.8 0.8 L5 5 L9.2 0.8" fill="none" stroke="#d8d8d8" stroke-width="1.55"/></svg>
<div style="left:619.2px;top:429.2px;width:30.6px;height:10.6px;background:#272727;box-shadow:inset 0 0 0 0.85px #868686;border-radius:2.4px;"></div>
<span class="t" style="top:431px;font-size:5.83px;line-height:8px;color:#fff;letter-spacing:-0.04px;-webkit-text-stroke:0.3px #fff;left:620.8px;">5</span>
<div style="left:652.2px;top:429.2px;width:30.4px;height:10.6px;background:#272727;box-shadow:inset 0 0 0 0.85px #868686;border-radius:2.4px;"></div>
<span class="t" style="top:431px;font-size:5.83px;line-height:8px;color:#fff;letter-spacing:-0.04px;-webkit-text-stroke:0.3px #fff;left:653.8px;">3</span>
<span class="t" style="top:444px;font-size:5.83px;line-height:8px;color:#fff;letter-spacing:-0.04px;-webkit-text-stroke:0.3px #fff;left:576.8px;">End Arrow</span>
<span class="t" style="top:444px;font-size:5.83px;line-height:8px;color:#fff;letter-spacing:-0.04px;-webkit-text-stroke:0.3px #fff;left:620px;">RadiusX</span>
<span class="t" style="top:444px;font-size:5.83px;line-height:8px;color:#fff;letter-spacing:-0.04px;-webkit-text-stroke:0.3px #fff;left:652.8px;">RadiusY</span>
<div style="left:575.6px;top:453.9px;width:41px;height:10.6px;background:#272727;box-shadow:inset 0 0 0 0.85px #868686;border-radius:2.4px;"></div>
<span class="t" style="top:456px;font-size:5.83px;line-height:8px;color:#fff;letter-spacing:-0.04px;-webkit-text-stroke:0.3px #fff;left:577.2px;">None</span>
<svg class="a" style="left:607.5px;top:458.2px" width="5.8" height="3.2" viewBox="0 0 10 6"><path d="M0.8 0.8 L5 5 L9.2 0.8" fill="none" stroke="#d8d8d8" stroke-width="1.55"/></svg>
<div style="left:619.2px;top:453.9px;width:30.6px;height:10.6px;background:#272727;box-shadow:inset 0 0 0 0.85px #868686;border-radius:2.4px;"></div>
<span class="t" style="top:456px;font-size:5.83px;line-height:8px;color:#fff;letter-spacing:-0.04px;-webkit-text-stroke:0.3px #fff;left:620.8px;">5</span>
<div style="left:652.2px;top:453.9px;width:30.4px;height:10.6px;background:#272727;box-shadow:inset 0 0 0 0.85px #868686;border-radius:2.4px;"></div>
<span class="t" style="top:456px;font-size:5.83px;line-height:8px;color:#fff;letter-spacing:-0.04px;-webkit-text-stroke:0.3px #fff;left:653.8px;">3</span>
<div style="left:687.2px;top:26.3px;width:112.2px;height:234.3px;background:#2a2a2a;box-shadow:inset 0 0 0 1px #565656;"></div>
<span class="t" style="top:29px;font-size:4.85px;line-height:8px;color:#fff;letter-spacing:-0.04px;-webkit-text-stroke:0.3px #fff;left:690.6px;">Options</span>
<div style="left:711.6px;top:29.9px;width:67.2px;height:3px;background:#333333;"></div>
<div style="left:780.9px;top:31.1px;width:4.9px;height:0.7px;background:#4a4a4a;"></div>
<svg class="a" style="left:789.8px;top:29.3px" width="4.4" height="4.4" viewBox="0 0 10 10"><path d="M1 1 L9 9 M9 1 L1 9" stroke="#4a4a4a" stroke-width="1.5" fill="none"/></svg>
<span class="t" style="top:43px;font-size:5.83px;line-height:8px;color:#fff;letter-spacing:-0.134px;-webkit-text-stroke:0.3px #fff;left:690.1px;">General</span>
<div style="left:690.1px;top:54.95px;width:19.8px;height:0.9px;background:#0078d7;"></div>
<span class="t" style="top:43px;font-size:5.83px;line-height:8px;color:#a2a2a2;letter-spacing:-0.048px;-webkit-text-stroke:0.15px #a2a2a2;left:715.1px;">Defaults</span>
<svg class="a" style="left:690px;top:60.2px" width="8.4" height="8.4" viewBox="0 0 20 20"><rect x="0" y="0" width="20" height="20" rx="4.2" fill="#0078d7"/><path d="M5.2 10.3 L8.3 13.2 L14.8 7.1" fill="none" stroke="#fff" stroke-width="1.6" stroke-linecap="round" stroke-linejoin="round"/></svg>
<span class="t" style="top:60px;font-size:5.83px;line-height:8px;color:#fff;letter-spacing:-0.04px;-webkit-text-stroke:0.3px #fff;left:702px;">SnapToGrid</span>
<span class="t" style="top:75px;font-size:5.83px;line-height:8px;color:#fff;letter-spacing:-0.04px;-webkit-text-stroke:0.3px #fff;left:691px;">SnapX</span>
<div style="left:690px;top:84.9px;width:106.9px;height:10.1px;background:#272727;box-shadow:inset 0 0 0 0.85px #868686;border-radius:2.4px;"></div>
<span class="t" style="top:86px;font-size:5.83px;line-height:8px;color:#fff;letter-spacing:-0.04px;-webkit-text-stroke:0.3px #fff;left:691.3px;">15</span>
<span class="t" style="top:99px;font-size:5.83px;line-height:8px;color:#fff;letter-spacing:-0.04px;-webkit-text-stroke:0.3px #fff;left:691px;">SnapY</span>
<div style="left:690px;top:109.1px;width:106.9px;height:10px;background:#272727;box-shadow:inset 0 0 0 0.85px #868686;border-radius:2.4px;"></div>
<span class="t" style="top:110px;font-size:5.83px;line-height:8px;color:#fff;letter-spacing:-0.04px;-webkit-text-stroke:0.3px #fff;left:691.3px;">15</span>
<span class="t" style="top:123px;font-size:5.83px;line-height:8px;color:#fff;letter-spacing:-0.04px;-webkit-text-stroke:0.3px #fff;left:691px;">HitThreshold</span>
<div style="left:690px;top:132.9px;width:106.9px;height:10.2px;background:#272727;box-shadow:inset 0 0 0 0.85px #868686;border-radius:2.4px;"></div>
<span class="t" style="top:134px;font-size:5.83px;line-height:8px;color:#fff;letter-spacing:-0.04px;-webkit-text-stroke:0.3px #fff;left:691.3px;">7</span>
<span class="t" style="top:147px;font-size:5.83px;line-height:8px;color:#fff;letter-spacing:-0.04px;-webkit-text-stroke:0.3px #fff;left:691px;">MoveMode</span>
<div style="left:690px;top:157px;width:106.9px;height:10px;background:#272727;box-shadow:inset 0 0 0 0.85px #868686;border-radius:2.4px;"></div>
<span class="t" style="top:158px;font-size:5.83px;line-height:8px;color:#fff;letter-spacing:-0.04px;-webkit-text-stroke:0.3px #fff;left:695px;">Point</span>
<svg class="a" style="left:787.5px;top:160.9px" width="5.8" height="3.2" viewBox="0 0 10 6"><path d="M0.8 0.8 L5 5 L9.2 0.8" fill="none" stroke="#d8d8d8" stroke-width="1.55"/></svg>
<svg class="a" style="left:690px;top:169.4px" width="8.4" height="8.4" viewBox="0 0 20 20"><rect x="0" y="0" width="20" height="20" rx="4.2" fill="#0078d7"/><path d="M5.2 10.3 L8.3 13.2 L14.8 7.1" fill="none" stroke="#fff" stroke-width="1.6" stroke-linecap="round" stroke-linejoin="round"/></svg>
<span class="t" style="top:170px;font-size:5.83px;line-height:8px;color:#fff;letter-spacing:-0.04px;-webkit-text-stroke:0.3px #fff;left:702px;">TryToConnect</span>
<div style="left:687.2px;top:259.6px;width:27.6px;height:13.2px;background:#2a2a2a;box-shadow:inset 0 0 0 1px #565656;"></div>
<div style="left:688.2px;top:259px;width:25.6px;height:1.7px;background:#2a2a2a;"></div>
<span class="t" style="top:263px;font-size:5.83px;line-height:8px;color:#2b8fe6;letter-spacing:-0.04px;-webkit-text-stroke:0.3px #2b8fe6;left:690.6px;">Options</span>
<span class="t" style="top:263px;font-size:5.83px;line-height:8px;color:#fff;letter-spacing:-0.04px;-webkit-text-stroke:0.3px #fff;left:718px;">Templates</span>
<span class="t" style="top:263px;font-size:5.83px;line-height:8px;color:#fff;letter-spacing:-0.04px;-webkit-text-stroke:0.3px #fff;left:751px;">Images</span>
<div style="left:687.2px;top:274.2px;width:112.2px;height:184px;background:#2a2a2a;box-shadow:inset 0 0 0 1px #565656;"></div>
<span class="t" style="top:277px;font-size:4.85px;line-height:8px;color:#fff;letter-spacing:-0.04px;-webkit-text-stroke:0.3px #fff;left:690.6px;">State</span>
<div style="left:705.6px;top:277.8px;width:73.2px;height:3px;background:#333333;"></div>
<div style="left:780.9px;top:279px;width:4.9px;height:0.7px;background:#4a4a4a;"></div>
<svg class="a" style="left:789.8px;top:277.2px" width="4.4" height="4.4" viewBox="0 0 10 10"><path d="M1 1 L9 9 M9 1 L1 9" stroke="#4a4a4a" stroke-width="1.5" fill="none"/></svg>
<svg class="a" style="left:690.15px;top:287px" width="8.5" height="8.5" viewBox="0 0 20 20"><rect x="0" y="0" width="20" height="20" rx="4.2" fill="#0078d7"/><path d="M5.2 10.3 L8.3 13.2 L14.8 7.1" fill="none" stroke="#fff" stroke-width="1.6" stroke-linecap="round" stroke-linejoin="round"/></svg>
<span class="t" style="top:288px;font-size:5.83px;line-height:8px;color:#fff;letter-spacing:-0.04px;-webkit-text-stroke:0.3px #fff;left:701.9px;">Visible</span>
<svg class="a" style="left:690.15px;top:300.35px" width="8.5" height="8.5" viewBox="0 0 20 20"><rect x="0" y="0" width="20" height="20" rx="4.2" fill="#0078d7"/><path d="M5.2 10.3 L8.3 13.2 L14.8 7.1" fill="none" stroke="#fff" stroke-width="1.6" stroke-linecap="round" stroke-linejoin="round"/></svg>
<span class="t" style="top:301px;font-size:5.83px;line-height:8px;color:#fff;letter-spacing:-0.04px;-webkit-text-stroke:0.3px #fff;left:701.9px;">Printable</span>
<svg class="a" style="left:690.15px;top:313.7px" width="8.5" height="8.5" viewBox="0 0 20 20"><rect x="1" y="1" width="18" height="18" rx="3.8" fill="#292929" stroke="#8c8c8c" stroke-width="1.9"/></svg>
<span class="t" style="top:314px;font-size:5.83px;line-height:8px;color:#fff;letter-spacing:-0.04px;-webkit-text-stroke:0.3px #fff;left:701.9px;">Locked</span>
<svg class="a" style="left:690.15px;top:327.05px" width="8.5" height="8.5" viewBox="0 0 20 20"><rect x="1" y="1" width="18" height="18" rx="3.8" fill="#292929" stroke="#8c8c8c" stroke-width="1.9"/></svg>
<span class="t" style="top:328px;font-size:5.83px;line-height:8px;color:#fff;letter-spacing:-0.04px;-webkit-text-stroke:0.3px #fff;left:701.9px;">Size</span>
<svg class="a" style="left:690.15px;top:340.4px" width="8.5" height="8.5" viewBox="0 0 20 20"><rect x="1" y="1" width="18" height="18" rx="3.8" fill="#292929" stroke="#8c8c8c" stroke-width="1.9"/></svg>
<span class="t" style="top:341px;font-size:5.83px;line-height:8px;color:#fff;letter-spacing:-0.272px;-webkit-text-stroke:0.3px #fff;left:701.9px;">Thickness</span>
<svg class="a" style="left:690.15px;top:353.75px" width="8.5" height="8.5" viewBox="0 0 20 20"><rect x="1" y="1" width="18" height="18" rx="3.8" fill="#292929" stroke="#8c8c8c" stroke-width="1.9"/></svg>
<span class="t" style="top:354px;font-size:5.83px;line-height:8px;color:#fff;letter-spacing:-0.04px;-webkit-text-stroke:0.3px #fff;left:701.9px;">Connector</span>
<svg class="a" style="left:690.15px;top:367.1px" width="8.5" height="8.5" viewBox="0 0 20 20"><rect x="1" y="1" width="18" height="18" rx="3.8" fill="#292929" stroke="#8c8c8c" stroke-width="1.9"/></svg>
<span class="t" style="top:368px;font-size:5.83px;line-height:8px;color:#fff;letter-spacing:-0.04px;-webkit-text-stroke:0.3px #fff;left:701.9px;">None</span>
<svg class="a" style="left:690.15px;top:380.45px" width="8.5" height="8.5" viewBox="0 0 20 20"><rect x="0" y="0" width="20" height="20" rx="4.2" fill="#0078d7"/><path d="M5.2 10.3 L8.3 13.2 L14.8 7.1" fill="none" stroke="#fff" stroke-width="1.6" stroke-linecap="round" stroke-linejoin="round"/></svg>
<span class="t" style="top:381px;font-size:5.83px;line-height:8px;color:#fff;letter-spacing:-0.04px;-webkit-text-stroke:0.3px #fff;left:701.9px;">Standalone</span>
<svg class="a" style="left:690.15px;top:393.8px" width="8.5" height="8.5" viewBox="0 0 20 20"><rect x="1" y="1" width="18" height="18" rx="3.8" fill="#292929" stroke="#8c8c8c" stroke-width="1.9"/></svg>
<span class="t" style="top:395px;font-size:5.83px;line-height:8px;color:#fff;letter-spacing:-0.04px;-webkit-text-stroke:0.3px #fff;left:701.9px;">Input</span>
<svg class="a" style="left:690.15px;top:407.15px" width="8.5" height="8.5" viewBox="0 0 20 20"><rect x="1" y="1" width="18" height="18" rx="3.8" fill="#292929" stroke="#8c8c8c" stroke-width="1.9"/></svg>
<span class="t" style="top:408px;font-size:5.83px;line-height:8px;color:#fff;letter-spacing:-0.04px;-webkit-text-stroke:0.3px #fff;left:701.9px;">Output</span>
<div style="left:687.2px;top:457.2px;width:20.8px;height:13px;background:#2a2a2a;box-shadow:inset 0 0 0 1px #565656;"></div>
<div style="left:688.2px;top:456.6px;width:18.8px;height:1.7px;background:#2a2a2a;"></div>
<span class="t" style="top:460px;font-size:5.83px;line-height:8px;color:#2b8fe6;letter-spacing:-0.04px;-webkit-text-stroke:0.3px #2b8fe6;left:690.6px;">State</span>
<span class="t" style="top:460px;font-size:5.83px;line-height:8px;color:#fff;letter-spacing:-0.04px;-webkit-text-stroke:0.3px #fff;left:710.6px;">Zoom</span>
<span class="t" style="top:460px;font-size:5.83px;line-height:8px;color:#fff;letter-spacing:-0.04px;-webkit-text-stroke:0.3px #fff;left:732.8px;">Renderer</span>
<div style="left:487px;top:318.9px;width:89.3px;height:124.2px;background:#222222;box-shadow:0 0 1.5px rgba(0,0,0,0.7);"></div>
<div style="left:490.1px;top:321.9px;width:74px;height:74.4px;background:linear-gradient(to top,#000,rgba(0,0,0,0)),linear-gradient(to right,#fff,#f00);"></div>
<div style="left:565px;top:321.9px;width:8.6px;height:74.4px;border-radius:2px;background:linear-gradient(to bottom,#f00 0%,#ff0 16.7%,#0f0 33.3%,#0ff 50%,#00f 66.7%,#f0f 83.3%,#f00 100%);border-bottom-left-radius:0;border-bottom-right-radius:0;"></div>
<div style="left:490.1px;top:397px;width:75px;height:8px;background:#000;"></div>
<svg class="a" style="left:488.6px;top:394.4px" width="4" height="4" viewBox="0 0 8 8"><circle cx="4" cy="4" r="1.7" fill="none" stroke="#eee" stroke-width="0.9"/></svg>
<span class="t" style="top:412px;font-size:5.83px;line-height:8px;color:#fff;letter-spacing:-0.056px;-webkit-text-stroke:0.3px #fff;left:491.7px;">Hex</span>
<div style="left:491.7px;top:421.95px;width:10.2px;height:0.9px;background:#0078d7;"></div>
<span class="t" style="top:412px;font-size:5.83px;line-height:8px;color:#a2a2a2;letter-spacing:-0.002px;-webkit-text-stroke:0.15px #a2a2a2;left:505px;">Alpha</span>
<span class="t" style="top:412px;font-size:5.83px;line-height:8px;color:#a2a2a2;letter-spacing:-0.711px;-webkit-text-stroke:0.15px #a2a2a2;left:523.4px;">RGB</span>
<span class="t" style="top:412px;font-size:5.83px;line-height:8px;color:#a2a2a2;letter-spacing:-0.396px;-webkit-text-stroke:0.15px #a2a2a2;left:537.4px;">HSV</span>
<span class="t" style="top:412px;font-size:5.83px;line-height:8px;color:#a2a2a2;letter-spacing:-0.436px;-webkit-text-stroke:0.15px #a2a2a2;left:551.7px;">CMYK</span>
<div style="left:491.9px;top:428.1px;width:80px;height:9.9px;background:#272727;box-shadow:inset 0 0 0 0.85px #868686;border-radius:2.4px;"></div>
<span class="t" style="top:429px;font-size:5.83px;line-height:8px;color:#fff;letter-spacing:-0.04px;-webkit-text-stroke:0.3px #fff;left:493.1px;">#FF000000</span>
<span class="t" style="top:473px;font-size:5.83px;line-height:8px;color:#fff;letter-spacing:-0.143px;-webkit-text-stroke:0.3px #fff;left:3px;">Selected: 1</span>
<svg class="a" style="left:298px;top:472px" width="8.4" height="8.4" viewBox="0 0 20 20"><rect x="0" y="0" width="20" height="20" rx="4.2" fill="#0078d7"/><path d="M5.2 10.3 L8.3 13.2 L14.8 7.1" fill="none" stroke="#fff" stroke-width="1.6" stroke-linecap="round" stroke-linejoin="round"/></svg>
<span class="t" style="top:473px;font-size:5.83px;line-height:8px;color:#fff;letter-spacing:-0.04px;-webkit-text-stroke:0.3px #fff;left:309.5px;">Stroked</span>
<svg class="a" style="left:334.3px;top:472px" width="8.4" height="8.4" viewBox="0 0 20 20"><rect x="1" y="1" width="18" height="18" rx="3.8" fill="#292929" stroke="#8c8c8c" stroke-width="1.9"/></svg>
<span class="t" style="top:473px;font-size:5.83px;line-height:8px;color:#fff;letter-spacing:-0.04px;-webkit-text-stroke:0.3px #fff;left:345.8px;">Filled</span>
<svg class="a" style="left:364.6px;top:472px" width="8.4" height="8.4" viewBox="0 0 20 20"><rect x="0" y="0" width="20" height="20" rx="4.2" fill="#0078d7"/><path d="M5.2 10.3 L8.3 13.2 L14.8 7.1" fill="none" stroke="#fff" stroke-width="1.6" stroke-linecap="round" stroke-linejoin="round"/></svg>
<span class="t" style="top:473px;font-size:5.83px;line-height:8px;color:#fff;letter-spacing:-0.04px;-webkit-text-stroke:0.3px #fff;left:376.1px;">Snap</span>
<svg class="a" style="left:394.6px;top:472px" width="8.4" height="8.4" viewBox="0 0 20 20"><rect x="0" y="0" width="20" height="20" rx="4.2" fill="#0078d7"/><path d="M5.2 10.3 L8.3 13.2 L14.8 7.1" fill="none" stroke="#fff" stroke-width="1.6" stroke-linecap="round" stroke-linejoin="round"/></svg>
<span class="t" style="top:473px;font-size:5.83px;line-height:8px;color:#fff;letter-spacing:-0.04px;-webkit-text-stroke:0.3px #fff;left:406.1px;">Connect</span>
<svg class="a" style="left:434.6px;top:472px" width="8.4" height="8.4" viewBox="0 0 20 20"><rect x="0" y="0" width="20" height="20" rx="4.2" fill="#0078d7"/><path d="M5.2 10.3 L8.3 13.2 L14.8 7.1" fill="none" stroke="#fff" stroke-width="1.6" stroke-linecap="round" stroke-linejoin="round"/></svg>
<span class="t" style="top:473px;font-size:5.83px;line-height:8px;color:#fff;letter-spacing:-0.04px;-webkit-text-stroke:0.3px #fff;left:446.1px;">Decorators</span>
<svg class="a" style="left:480px;top:472px" width="8.4" height="8.4" viewBox="0 0 20 20"><rect x="0" y="0" width="20" height="20" rx="4.2" fill="#0078d7"/><path d="M5.2 10.3 L8.3 13.2 L14.8 7.1" fill="none" stroke="#fff" stroke-width="1.6" stroke-linecap="round" stroke-linejoin="round"/></svg>
<span class="t" style="top:473px;font-size:5.83px;line-height:8px;color:#fff;letter-spacing:-0.04px;-webkit-text-stroke:0.3px #fff;left:491.5px;">Points</span>
</div></body></html>
